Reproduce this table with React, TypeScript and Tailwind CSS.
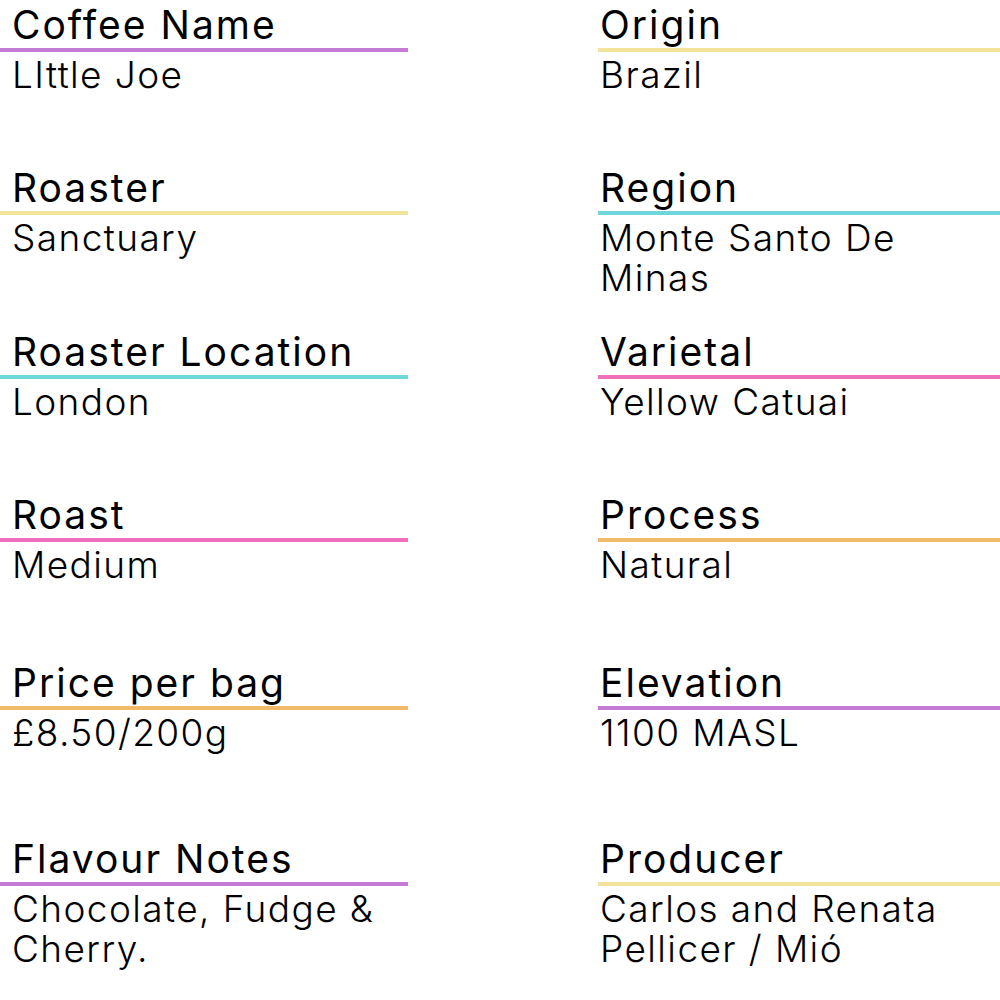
import React from 'react';

type Field = {
  label: string;
  value: string;
  bar: string;
};

const leftFields: Field[] = [
  { label: 'Coffee Name', value: 'LIttle Joe', bar: 'border-[#c57ad6]' },
  { label: 'Roaster', value: 'Sanctuary', bar: 'border-[#f2e39a]' },
  { label: 'Roaster Location', value: 'London', bar: 'border-[#6fd6dc]' },
  { label: 'Roast', value: 'Medium', bar: 'border-[#ee6fbb]' },
  { label: 'Price per bag', value: '£8.50/200g', bar: 'border-[#f0ba6a]' },
  { label: 'Flavour Notes', value: 'Chocolate, Fudge & Cherry.', bar: 'border-[#c57ad6]' },
];

const rightFields: Field[] = [
  { label: 'Origin', value: 'Brazil', bar: 'border-[#f2e39a]' },
  { label: 'Region', value: 'Monte Santo De Minas', bar: 'border-[#6fd6dc]' },
  { label: 'Varietal', value: 'Yellow Catuai', bar: 'border-[#ee6fbb]' },
  { label: 'Process', value: 'Natural', bar: 'border-[#f0ba6a]' },
  { label: 'Elevation', value: '1100 MASL', bar: 'border-[#c57ad6]' },
  { label: 'Producer', value: 'Carlos and Renata Pellicer / Mió', bar: 'border-[#f2e39a]' },
];

function FieldBlock({ field, side }: { field: Field; side: 'left' | 'right' }) {
  return (
    <div className="flex flex-col">
      <div
        className={`border-b-4 ${field.bar} pt-[2px] text-[39px] leading-[46px] tracking-[2px] font-normal text-black whitespace-nowrap ${
          side === 'left' ? 'pl-3' : 'pl-[2px]'
        }`}
      >
        {field.label}
      </div>
      <div
        className={`pt-[3px] text-[37px] leading-[40px] tracking-[1.4px] font-light text-black ${
          side === 'left' ? 'pl-3 pr-4' : 'pl-[2px] pr-4'
        }`}
      >
        {field.value}
      </div>
    </div>
  );
}

export default function App() {
  return (
    <div className="w-[1000px] h-[1000px] bg-white overflow-hidden font-['Inter','Liberation_Sans',sans-serif]">
      <div className="grid grid-cols-[408px_402px] gap-x-[190px] grid-rows-[163px_164px_163px_168px_176px_auto]">
        {leftFields.map((f, i) => (
          <React.Fragment key={f.label}>
            <FieldBlock field={f} side="left" />
            <FieldBlock field={rightFields[i]} side="right" />
          </React.Fragment>
        ))}
      </div>
    </div>
  );
}
